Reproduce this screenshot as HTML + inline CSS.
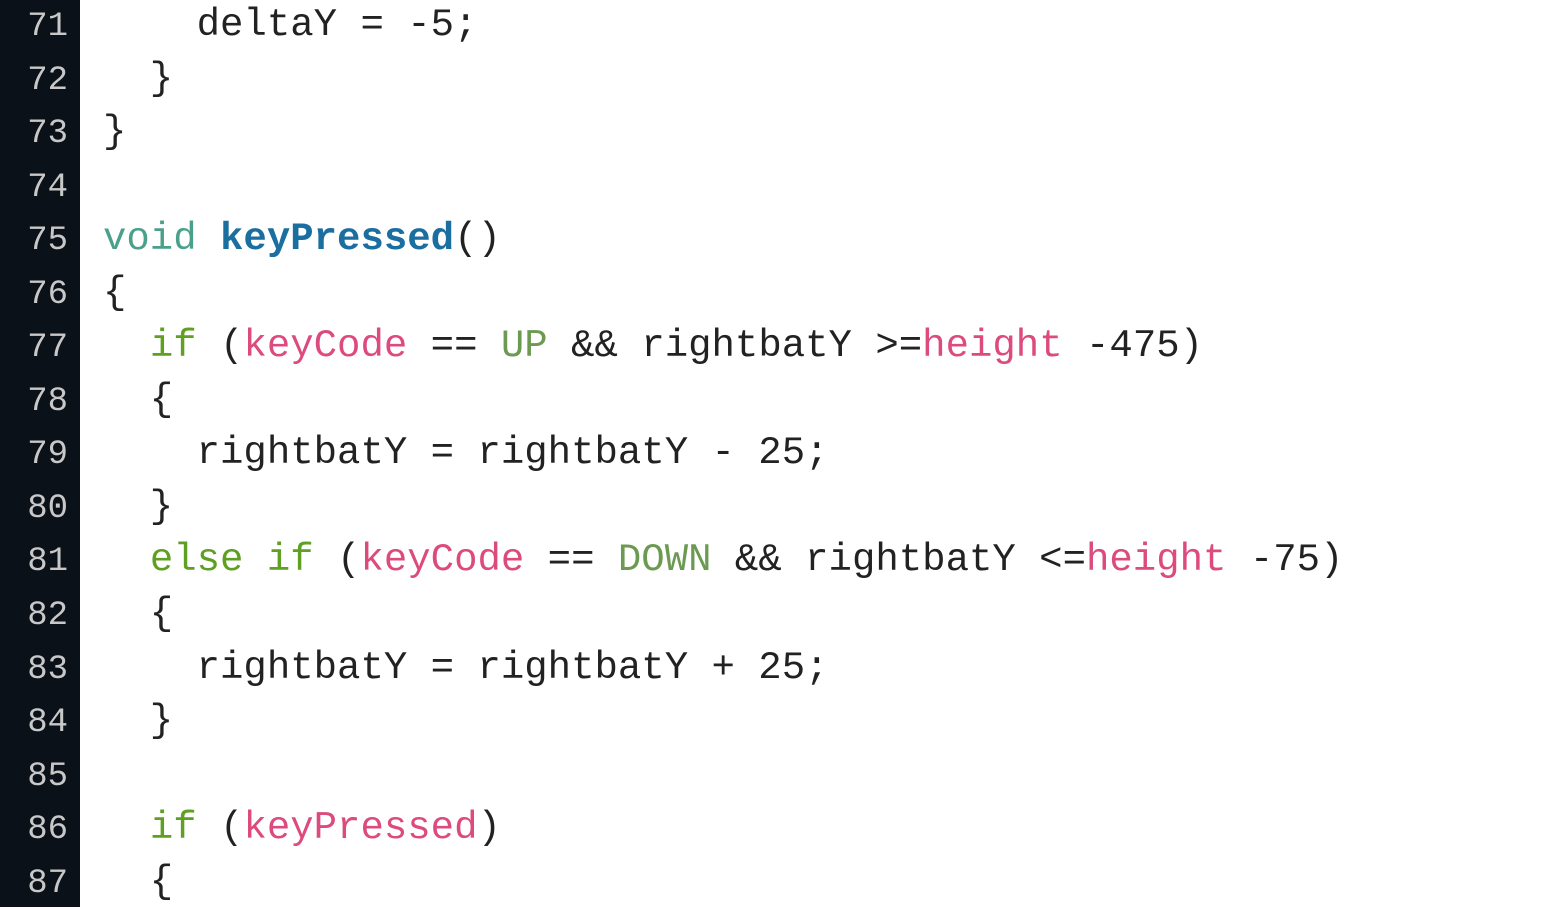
<!DOCTYPE html><html><head><style>
body{margin:0;width:1556px;height:907px;overflow:hidden;background:#fff;position:relative}
.g{position:absolute;left:0;top:0;width:80px;height:907px;background:#0b1118}
.c{position:absolute;top:-1px;left:0;font-family:"Liberation Mono",monospace;font-size:39px;color:#222}
.c div{height:53.56px;line-height:53.56px;white-space:pre;overflow:visible}
.n{width:68px;text-align:right;color:#c8c8c8;display:inline-block;margin-right:35px;font-size:34px;line-height:10px}
.v{color:#4aa08a}.f{color:#1a6ea0;font-weight:bold}.k{color:#5f9f22}.p{color:#dc4a7e}.u{color:#6c9a52}
</style></head><body><div class="g"></div><div class="c">
<div><span class="n">71</span>    deltaY = -5;</div>
<div><span class="n">72</span>  }</div>
<div><span class="n">73</span>}</div>
<div><span class="n">74</span></div>
<div><span class="n">75</span><span class="v">void</span> <span class="f">keyPressed</span>()</div>
<div><span class="n">76</span>{</div>
<div><span class="n">77</span>  <span class="k">if</span> (<span class="p">keyCode</span> == <span class="u">UP</span> &amp;&amp; rightbatY &gt;=<span class="p">height</span> -475)</div>
<div><span class="n">78</span>  {</div>
<div><span class="n">79</span>    rightbatY = rightbatY - 25;</div>
<div><span class="n">80</span>  }</div>
<div><span class="n">81</span>  <span class="k">else if</span> (<span class="p">keyCode</span> == <span class="u">DOWN</span> &amp;&amp; rightbatY &lt;=<span class="p">height</span> -75)</div>
<div><span class="n">82</span>  {</div>
<div><span class="n">83</span>    rightbatY = rightbatY + 25;</div>
<div><span class="n">84</span>  }</div>
<div><span class="n">85</span></div>
<div><span class="n">86</span>  <span class="k">if</span> (<span class="p">keyPressed</span>)</div>
<div><span class="n">87</span>  {</div>
</div></body></html>
